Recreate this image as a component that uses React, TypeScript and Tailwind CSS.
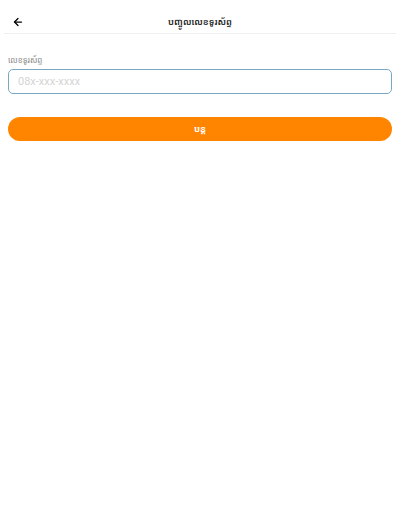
import { ArrowLeft } from 'lucide-react'

const KHMER = { fontFamily: '"Noto Sans Khmer", "Khmer OS", Roboto, "Noto Sans", sans-serif' }

export default function App() {
  return (
    <div className="min-h-[520px] w-full bg-white" style={KHMER}>
      <div className="mx-1 flex h-[34px] items-center border-b border-[#efefef] px-[2px] pt-[11px]">
        <button className="flex h-6 w-6 items-center justify-center text-black">
          <ArrowLeft size={12} strokeWidth={2.5} />
        </button>
        <div className="flex-1 text-center text-[9px] font-semibold text-[#222]">បញ្ចូលលេខទូរស័ព្ទ</div>
        <div className="w-6" />
      </div>

      <div className="px-2 pt-[19px]">
        <label className="block text-[8px] leading-[14px] text-[#8a8a8a]">លេខទូរស័ព្ទ</label>
        <input
          className="mt-[2px] h-[25px] w-full rounded-[5px] border border-[#79a9c2] px-[9px] text-[11px] text-[#333] outline-none placeholder:text-[#d4d4d4]"
          style={{ fontFamily: 'Roboto, sans-serif' }}
          placeholder="08x-xxx-xxxx"
        />
        <button className="mt-[23px] flex h-[24px] w-full items-center justify-center rounded-full bg-[#ff8400] text-[9px] font-bold text-white">
          បន្ត
        </button>
      </div>
    </div>
  )
}
